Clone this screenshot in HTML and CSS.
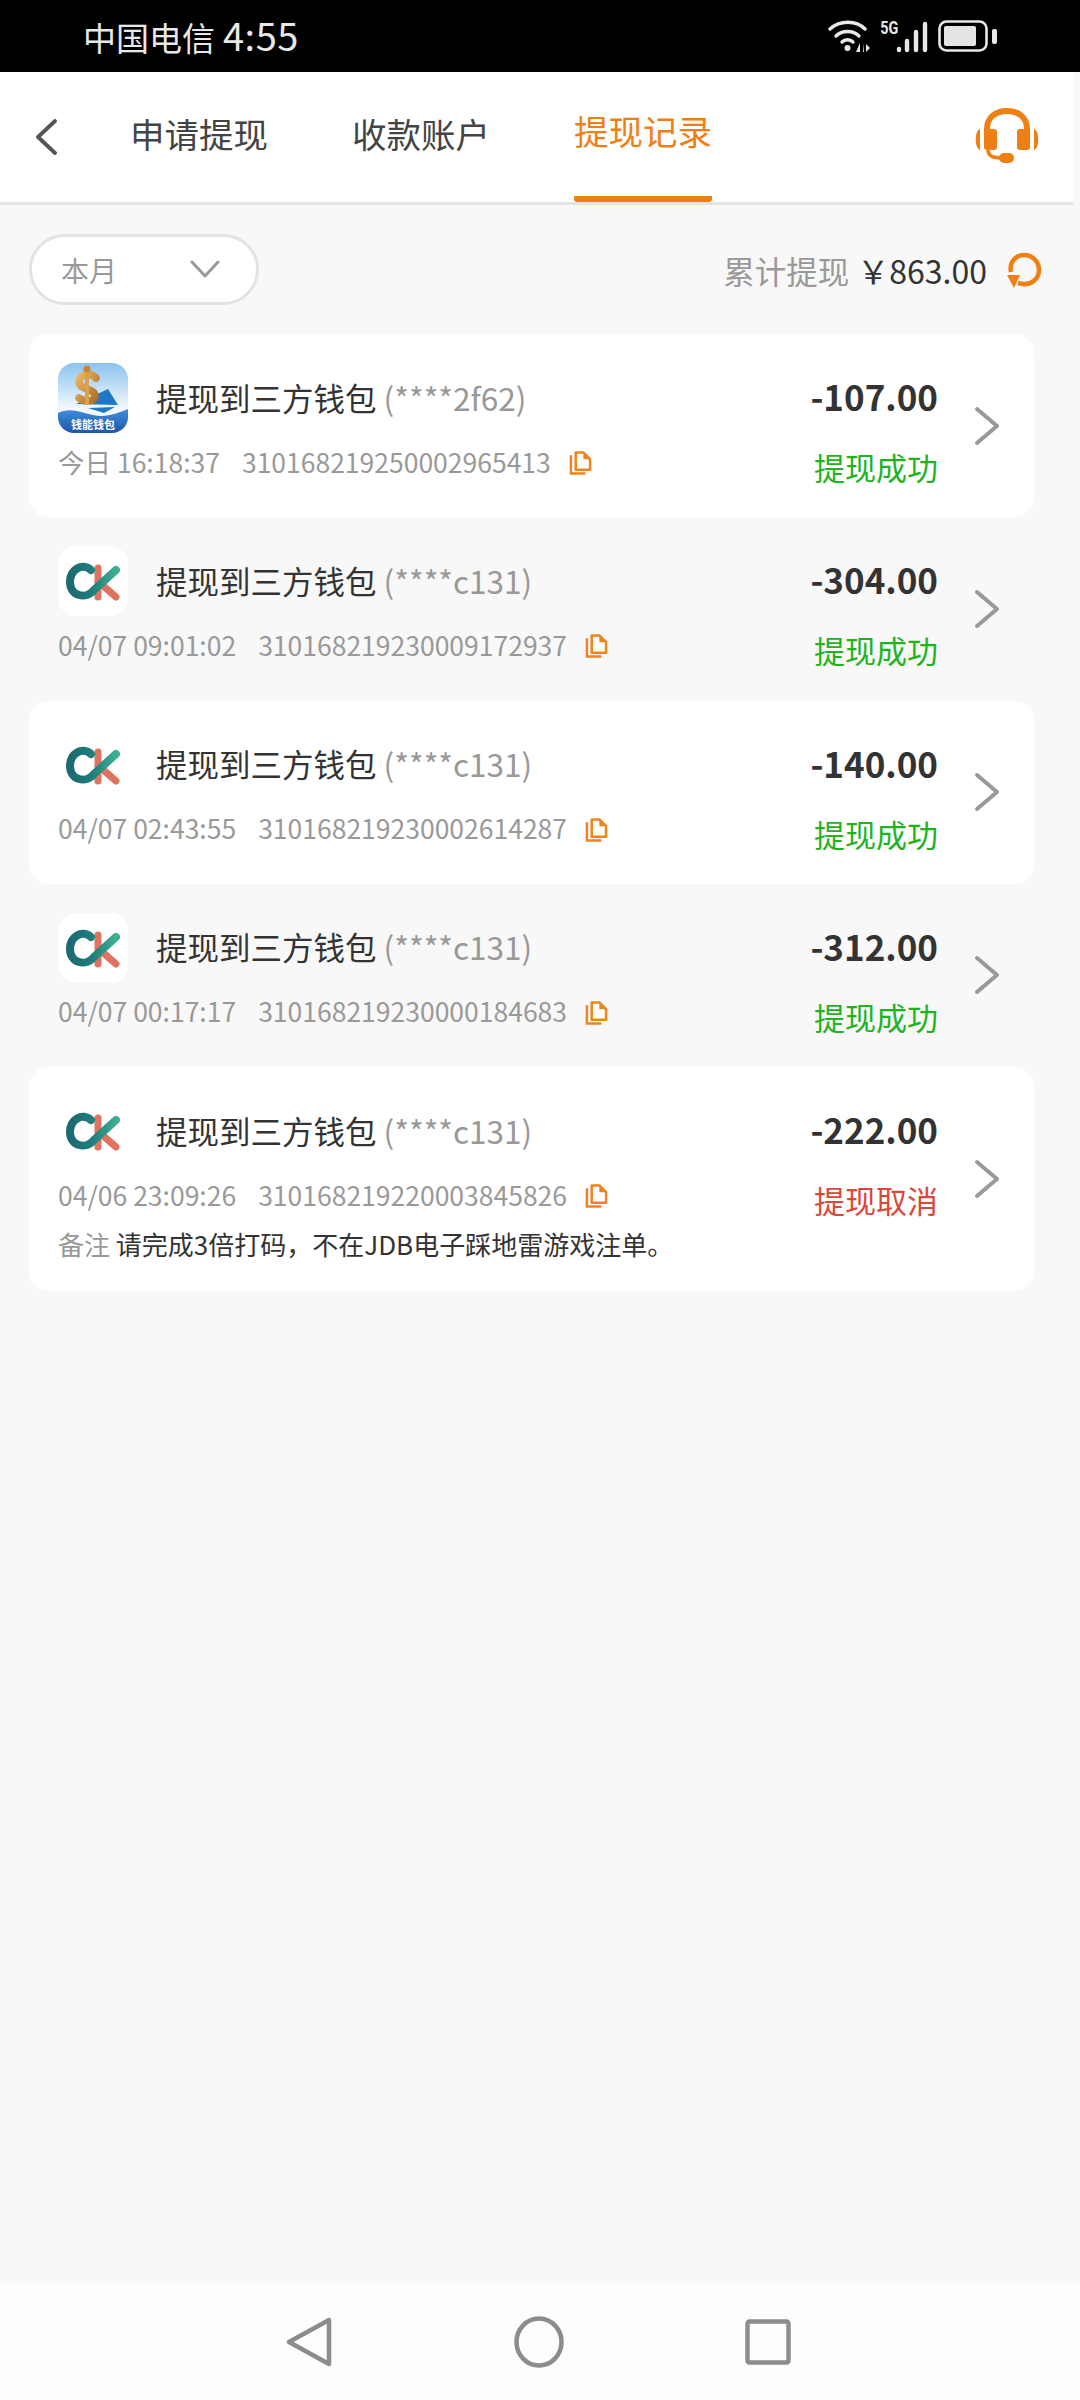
FILE: index.html
```html
<!DOCTYPE html>
<html lang="zh-CN">
<head>
    <meta charset="UTF-8">
    <meta name="viewport" content="width=device-width, initial-scale=1.0">
    <title>提现记录</title>
    <link rel="stylesheet" href="styles.css">
</head>
<body>
    <svg class="defs" width="0" height="0">
        <defs>
            <linearGradient id="ck-teal" x1="0" y1="0" x2="1" y2="0">
                <stop offset="0" stop-color="#1c6a72"/>
                <stop offset="0.5" stop-color="#1f7f7c"/>
                <stop offset="1" stop-color="#3fae94"/>
            </linearGradient>
            <symbol id="logo-ck" viewBox="0 0 70 70">
                <rect width="70" height="70" rx="18" fill="#fff"/>
                <path d="M40 22 L40 51" stroke="#e0735f" stroke-width="7" stroke-linecap="round"/>
                <path d="M42 37 L58 51" stroke="#e0735f" stroke-width="7" stroke-linecap="round"/>
                <path d="M33 24 C24 16 12 24 12 36 C12 50 28 54 36 44 L58 24" fill="none" stroke="url(#ck-teal)" stroke-width="8" stroke-linecap="round"/>
            </symbol>
            <symbol id="icon-copy" viewBox="0 0 24 26">
                <path d="M2 5 V24 H17" fill="none" stroke="#ee8420" stroke-width="2.6"/>
                <path d="M7 2 H15 L22 9 V20 H7 Z" fill="#fff" stroke="#ee8420" stroke-width="2.6" stroke-linejoin="round"/>
                <path d="M15 2 V9 H22 L15 2 Z" fill="#ee8420"/>
            </symbol>
            <symbol id="icon-more" viewBox="0 0 26 40">
                <path d="M3 3 L23 20 L3 37" fill="none" stroke="#999" stroke-width="4" stroke-linecap="round" stroke-linejoin="round"/>
            </symbol>
        </defs>
    </svg>

    <div class="page">
        <!-- status bar -->
        <div class="status-bar">
            <span class="carrier">中国电信<span class="clock">4:55</span></span>
            <div class="status-icons">
                <svg class="ic-wifi" width="46" height="34" viewBox="0 0 46 34">
                    <g fill="none" stroke="#e8e8e8" stroke-width="3.4" stroke-linecap="round">
                        <path d="M2 10 C12 1 28 1 37 10"/>
                        <path d="M8 17 C14 11 25 11 31 17"/>
                        <path d="M14 23 C17 20 22 20 25 23"/>
                    </g>
                    <circle cx="19.500" cy="29" r="3" fill="#e8e8e8"/>
                    <path d="M32 24 V33 H28 Z M35 24 V33 H36 M38 25 L42 29 L38 33 Z" fill="#e8e8e8"/>
                </svg>
                <div class="signal">
                    <span class="five-g">5G</span>
                    <svg width="32" height="32" viewBox="0 0 32 32">
                        <g stroke="#e8e8e8" stroke-width="4.400" stroke-linecap="round">
                            <path d="M3 28 V29"/>
                            <path d="M11 20 V29"/>
                            <path d="M20 11 V29"/>
                            <path d="M29 3 V29"/>
                        </g>
                    </svg>
                </div>
                <svg width="60" height="32" viewBox="0 0 60 32">
                    <rect x="1.500" y="1.500" width="47" height="29" rx="7" fill="none" stroke="#e8e8e8" stroke-width="2.600"/>
                    <rect x="6" y="6" width="32" height="20" rx="2" fill="#e4e4e4"/>
                    <rect x="54" y="9" width="5" height="15" rx="2" fill="#e8e8e8"/>
                </svg>
            </div>
        </div>

        <!-- tabs -->
        <header class="header">
            <svg class="back" width="24" height="36" viewBox="0 0 24 36">
                <path d="M21 2 L4 18 L21 34" fill="none" stroke="#555" stroke-width="3.800" stroke-linecap="round" stroke-linejoin="round"/>
            </svg>
            <nav class="tabs">
                <a class="tab">申请提现</a>
                <a class="tab">收款账户</a>
                <a class="tab active">提现记录</a>
            </nav>
            <svg class="service" width="64" height="56" viewBox="0 0 64 56">
                <path d="M12 24 V21 C12 9 21 3 32 3 C43 3 52 9 52 21 V24" fill="none" stroke="#f07f13" stroke-width="6"/>
                <rect x="9" y="21" width="13" height="21" rx="3" fill="#f07f13"/>
                <rect x="42" y="21" width="13" height="21" rx="3" fill="#f07f13"/>
                <path d="M4 23 C1 26 1 37 4 40 L4 23 Z M60 23 C63 26 63 37 60 40 L60 23 Z" fill="#f07f13" stroke="#f07f13" stroke-width="2"/>
                <path d="M13 42 C13 48 18 50 26 50" fill="none" stroke="#f07f13" stroke-width="3.500"/>
                <rect x="24" y="45" width="15" height="10" rx="5" fill="#f07f13"/>
            </svg>
        </header>

        <!-- filter -->
        <div class="toolbar">
            <div class="month-select">
                <span>本月</span>
                <svg width="30" height="19" viewBox="0 0 30 19">
                    <path d="M2 2 L15 16 L28 2" fill="none" stroke="#999" stroke-width="3" stroke-linecap="round" stroke-linejoin="round"/>
                </svg>
            </div>
            <div class="total">
                <span class="total-label">累计提现</span>
                <span class="total-value">￥863.00</span>
                <svg class="refresh" width="36" height="38" viewBox="0 0 36 38">
                    <path d="M5 20 C3 10 10 3 18 3 C27 3 33 10 33 18 C33 27 25 33 17 32 L12 31" fill="none" stroke="#f07f13" stroke-width="4.500"/>
                    <path d="M1 23 L14 23 L8 36 Z" fill="#f07f13"/>
                </svg>
            </div>
        </div>

        <!-- records -->
        <main class="records">
            <article class="record card">
                <div class="record-main">
                    <div class="record-title">
                        <svg class="logo" width="70" height="70" viewBox="0 0 70 70">
                            <defs>
                                <linearGradient id="sky" x1="0" y1="0" x2="0" y2="1">
                                    <stop offset="0" stop-color="#8cc3ee"/>
                                    <stop offset="0.65" stop-color="#f2f8fd"/>
                                </linearGradient>
                                <linearGradient id="gold" x1="0" y1="0" x2="1" y2="1">
                                    <stop offset="0" stop-color="#e9b468"/>
                                    <stop offset="1" stop-color="#b06f22"/>
                                </linearGradient>
                                <linearGradient id="sea" x1="0" y1="0" x2="0" y2="1">
                                    <stop offset="0" stop-color="#3f8fdc"/>
                                    <stop offset="1" stop-color="#1f56a8"/>
                                </linearGradient>
                                <clipPath id="round-logo">
                                    <rect width="70" height="70" rx="16"/>
                                </clipPath>
                            </defs>
                            <g clip-path="url(#round-logo)">
                                <rect width="70" height="70" fill="url(#sky)"/>
                                <path d="M18 41 L50 26 L60 42 Z" fill="#1e78c8"/>
                                <path d="M30 45 L57 44 L46 50 Z" fill="#1e78c8"/>
                                <path d="M38 15 C33 9 21 11 21 19 C21 27 37 25 37 33 C37 39 26 39 21 35" fill="none" stroke="url(#gold)" stroke-width="7.500" stroke-linecap="round"/>
                                <path d="M29 6 V42" stroke="#dca050" stroke-width="4"/>
                                <circle cx="29" cy="6" r="3.500" fill="#c98532"/>
                                <path d="M0 50 C12 44 22 49 35 52 C48 55 60 50 70 46 V70 H0 Z" fill="url(#sea)"/>
                                <text class="logo-text" x="35" y="66" text-anchor="middle">钱能钱包</text>
                            </g>
                        </svg>
                        <span class="wallet">提现到三方钱包 <em>(****2f62)</em></span>
                    </div>
                    <div class="record-meta">
                        <span>今日 16:18:37</span>
                        <span>310168219250002965413</span>
                        <svg class="copy"><use href="#icon-copy"/></svg>
                    </div>
                </div>
                <div class="record-side">
                    <span class="amount">-107.00</span>
                    <span class="state ok">提现成功</span>
                </div>
                <svg class="more"><use href="#icon-more"/></svg>
            </article>

            <article class="record">
                <div class="record-main">
                    <div class="record-title">
                        <svg class="logo"><use href="#logo-ck"/></svg>
                        <span class="wallet">提现到三方钱包 <em>(****c131)</em></span>
                    </div>
                    <div class="record-meta">
                        <span>04/07 09:01:02</span>
                        <span>310168219230009172937</span>
                        <svg class="copy"><use href="#icon-copy"/></svg>
                    </div>
                </div>
                <div class="record-side">
                    <span class="amount">-304.00</span>
                    <span class="state ok">提现成功</span>
                </div>
                <svg class="more"><use href="#icon-more"/></svg>
            </article>

            <article class="record card">
                <div class="record-main">
                    <div class="record-title">
                        <svg class="logo"><use href="#logo-ck"/></svg>
                        <span class="wallet">提现到三方钱包 <em>(****c131)</em></span>
                    </div>
                    <div class="record-meta">
                        <span>04/07 02:43:55</span>
                        <span>310168219230002614287</span>
                        <svg class="copy"><use href="#icon-copy"/></svg>
                    </div>
                </div>
                <div class="record-side">
                    <span class="amount">-140.00</span>
                    <span class="state ok">提现成功</span>
                </div>
                <svg class="more"><use href="#icon-more"/></svg>
            </article>

            <article class="record">
                <div class="record-main">
                    <div class="record-title">
                        <svg class="logo"><use href="#logo-ck"/></svg>
                        <span class="wallet">提现到三方钱包 <em>(****c131)</em></span>
                    </div>
                    <div class="record-meta">
                        <span>04/07 00:17:17</span>
                        <span>310168219230000184683</span>
                        <svg class="copy"><use href="#icon-copy"/></svg>
                    </div>
                </div>
                <div class="record-side">
                    <span class="amount">-312.00</span>
                    <span class="state ok">提现成功</span>
                </div>
                <svg class="more"><use href="#icon-more"/></svg>
            </article>

            <article class="record card has-note">
                <div class="record-main">
                    <div class="record-title">
                        <svg class="logo"><use href="#logo-ck"/></svg>
                        <span class="wallet">提现到三方钱包 <em>(****c131)</em></span>
                    </div>
                    <div class="record-meta">
                        <span>04/06 23:09:26</span>
                        <span>310168219220003845826</span>
                        <svg class="copy"><use href="#icon-copy"/></svg>
                    </div>
                    <p class="note"><span>备注</span> 请完成3倍打码，不在JDB电子踩地雷游戏注单。</p>
                </div>
                <div class="record-side">
                    <span class="amount">-222.00</span>
                    <span class="state fail">提现取消</span>
                </div>
                <svg class="more"><use href="#icon-more"/></svg>
            </article>
        </main>

        <!-- system nav -->
        <footer class="nav-bar">
            <svg width="48" height="52" viewBox="0 0 48 52">
                <path d="M44 4 L4 26 L44 48 Z" fill="none" stroke="#8c8c8c" stroke-width="4.500" stroke-linejoin="round"/>
            </svg>
            <svg width="50" height="52" viewBox="0 0 50 52">
                <ellipse cx="25" cy="26" rx="22.500" ry="23.500" fill="none" stroke="#8c8c8c" stroke-width="4.500"/>
            </svg>
            <svg width="46" height="46" viewBox="0 0 46 46">
                <rect x="2.500" y="2.500" width="41" height="41" rx="2" fill="none" stroke="#8c8c8c" stroke-width="4.500"/>
            </svg>
        </footer>
    </div>
</body>
</html>
```

FILE: styles.css
```css
* {
    box-sizing: border-box;
}
body {
    margin: 0;
    background-color: #f8f8f8;
    font-family: "Noto Sans CJK SC", "Noto Sans", sans-serif;
    color: #333;
}
.defs {
    display: block;
    height: 0;
}
.page {
    display: flex;
    flex-direction: column;
    height: 2400px;
}

/* status bar */
.status-bar {
    display: flex;
    align-items: center;
    justify-content: space-between;
    height: 72px;
    padding: 0 82px 0 83px;
    background-color: #000;
    color: #e8e8e8;
}
.carrier {
    font-size: 33px;
    line-height: 72px;
}
.clock {
    margin-left: 8px;
    font-size: 38px;
    letter-spacing: 0.5px;
}
.status-icons {
    display: flex;
    align-items: center;
    gap: 10px;
}
.ic-wifi {
    margin-right: -6px;
}
.signal {
    display: flex;
    align-items: flex-end;
    height: 34px;
}
.five-g {
    align-self: flex-start;
    font-family: "Roboto", sans-serif;
    font-size: 18px;
    font-weight: 700;
    line-height: 18px;
    transform: scaleX(0.8);
    margin-right: -5px;
}

/* tabs */
.header {
    display: flex;
    align-items: stretch;
    height: 133px;
    margin-right: 7px;
    padding-left: 34px;
    background-color: #fff;
    border-bottom: 3px solid #e3e3e3;
}
.back {
    align-self: center;
}
.tabs {
    display: flex;
    gap: 84px;
    margin-left: 72px;
}
.tab {
    display: flex;
    align-items: center;
    font-size: 34.500px;
    color: #444;
    height: 130px;
    padding-bottom: 8px;
}
.tab.active {
    color: #f07f13;
    border-bottom: 6px solid #f07f13;
    border-radius: 0 0 3px 3px;
}
.service {
    align-self: center;
    margin-left: auto;
    margin-right: 34px;
    margin-bottom: 2px;
}

/* filter row */
.toolbar {
    display: flex;
    align-items: center;
    justify-content: space-between;
    height: 129px;
    padding: 0 38px 0 29px;
}
.month-select {
    display: flex;
    align-items: center;
    justify-content: space-between;
    width: 230px;
    height: 71px;
    padding: 0 36px 0 29px;
    background-color: #fff;
    border: 3px solid #e3e3e3;
    border-radius: 36px;
    font-size: 28px;
    color: #999;
}
.total {
    display: flex;
    align-items: center;
    font-size: 31.500px;
}
.total-label {
    color: #999;
}
.total-value {
    margin-left: 8px;
    margin-right: 19px;
    font-size: 32px;
    color: #333;
}
.refresh {
    margin-top: 3px;
}

/* records */
.records {
    flex: 1;
    padding: 0 46px 0 29px;
}
.record {
    display: flex;
    align-items: center;
    height: 183.250px;
    padding: 0 34px 0 29px;
    border-radius: 20px;
}
.record.card {
    background-color: #fff;
}
.record.has-note {
    height: 224px;
}
.record-main {
    flex: 1;
    align-self: flex-start;
    padding-top: 29px;
}
.record-title {
    display: flex;
    align-items: center;
    gap: 28px;
    height: 70px;
}
.logo {
    flex-shrink: 0;
    width: 70px;
    height: 70px;
}
.logo-text {
    font-family: "Noto Sans CJK SC", sans-serif;
    font-size: 11px;
    font-weight: 700;
    fill: #fff;
}
.wallet {
    margin-bottom: 3px;
    font-size: 31.500px;
    color: #333;
}
.wallet em {
    font-style: normal;
    color: #999;
}
.record-meta {
    display: flex;
    align-items: center;
    gap: 22px;
    margin-top: 10px;
    height: 36px;
    font-size: 26.500px;
    color: #999;
}
.copy {
    width: 23px;
    height: 26px;
    margin-left: -4px;
    margin-top: 4px;
}
.note {
    margin: 15px 0 0;
    font-size: 26px;
    line-height: 34px;
    color: #333;
}
.note span {
    color: #999;
}
.record-side {
    align-self: flex-start;
    display: flex;
    flex-direction: column;
    align-items: flex-end;
    padding-top: 37px;
    margin-right: 36px;
}
.amount {
    font-size: 35px;
    font-weight: 700;
    line-height: 50px;
    color: #333;
}
.state {
    margin-top: 24px;
    font-size: 31px;
    line-height: 44px;
}
.state.ok {
    color: #1fb31f;
}
.state.fail {
    color: #d9483b;
}
.more {
    flex-shrink: 0;
    width: 26px;
    height: 40px;
}

/* system nav */
.nav-bar {
    display: flex;
    align-items: center;
    justify-content: center;
    gap: 181px;
    height: 117px;
    padding-right: 4px;
    background-color: #fdfdfd;
}
```
